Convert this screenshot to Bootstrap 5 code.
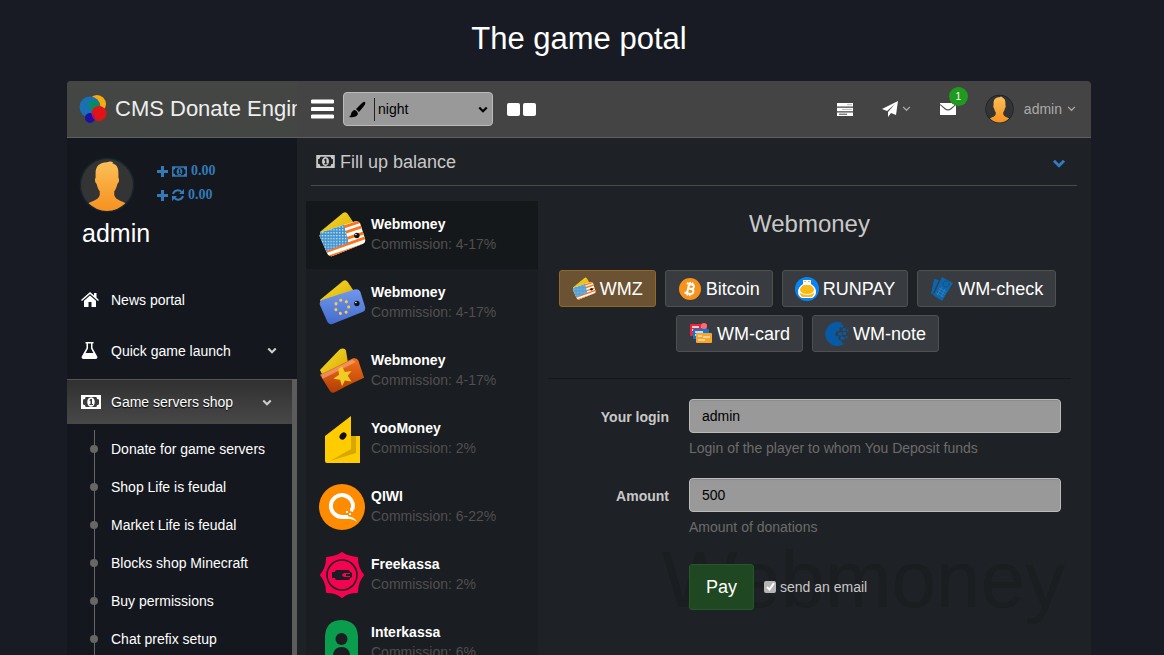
<!DOCTYPE html>
<html lang="en">
<head>
<meta charset="utf-8">
<meta name="viewport" content="width=device-width, initial-scale=1">
<title>CMS Donate Engine</title>
<link href="https://cdn.jsdelivr.net/npm/bootstrap@5.3.0/dist/css/bootstrap.min.css" rel="stylesheet">
<style>
  body { background: #181b23; color: #c8c8c8; font: 14px/20px "Liberation Sans", Arial, sans-serif; }
  a { text-decoration: none; }
  svg { display: block; flex: none; }
  button { font-family: inherit; }
  .shell { padding: 0 73px 0 67px; }
  .page-title { font-size: 31px; line-height: 37px; padding-top: 20px; padding-bottom: 24px; color: #fff; }
  .panel { background: #1e2125; border-radius: 4px 4px 0 0; }

  .topbar { background: #444; height: 57px; border-bottom: 1px solid #5e5e5e; border-radius: 4px 4px 0 0; }
  .brand { width: 230px; height: 56px; padding-left: 12px; gap: 8px; background: #444644; border-radius: 4px 0 0 0; color: #eee; font-size: 22px; white-space: nowrap; }
  .icon-btn { background: none; border: 0; padding: 0; color: #fff; }
  .burger { margin-left: 14px; }
  .theme-picker { width: 150px; margin: 0 14px 0 9px; color: #000; }
  .theme-picker select { width: 100%; height: 34px; padding: 0 30px 0 34px; appearance: none; background: #999; border: 1px solid #bbb; border-radius: 4px; color: #000; }
  .theme-picker .brush { left: 6px; top: 9px; }
  .theme-picker .bar { left: 31px; top: 6px; width: 1px; height: 23px; background: #222; }
  .theme-picker .arrow { right: 5px; top: 14px; }
  .tiles { gap: 3px; }
  .tiles span { width: 13px; height: 13px; background: #fff; border-radius: 2px; }
  .tools { padding-right: 15px; gap: 29px; }
  .tools a { color: #aaa; }
  .account { gap: 5px; }
  .account span { padding-left: 5px; }
  .count { top: -16px; left: 9px; width: 19px; height: 19px; border-radius: 50%; background: #1f9a1f; color: #fff; font-size: 10px; line-height: 19px; text-align: center; }

  .sidebar { width: 230px; background: #14171e; flex: none; }
  .profile { padding: 19px 12px 0; gap: 22px; }
  .balances { font: bold 14px/24px "Liberation Serif", "Times New Roman", serif; padding-top: 2px; }
  .balances a { color: #337ab7; gap: 4px; }
  .user-name { font-size: 25px; line-height: 32px; color: #fff; padding: 4px 0 0 15px; margin-bottom: 28px; }
  .menu { gap: 6px; }
  .menu-link { height: 45px; padding: 0 20px 0 14px; color: #fff; }
  .menu-link .glyph { width: 30px; }
  .menu-link .arrow { color: #ccc; }
  .scroller { border-right: 5px solid #5c5c5c; padding-bottom: 20px; }
  .menu-link.current { background: linear-gradient(#303030, #484848); border-top: 1px solid #555; text-shadow: 0 1px 1px #000; }
  .submenu { margin: 6px 0 0 27px; border-left: 1px solid #666; }
  .submenu a { height: 38px; color: #fff; }
  .submenu a::before { content: ""; width: 8px; height: 8px; margin: 0 13px 0 -5px; border-radius: 50%; background: #666; }

  .section-head { height: 48px; margin: 0 14px; padding: 0 11px 0 5px; border-bottom: 1px solid #4a4a4a; }
  .section-head h2 { font-size: 18px; line-height: 24px; gap: 5px; }
  .section-head .icon-btn { color: #337ac0; padding-top: 4px; }
  .workarea { padding: 15px 20px 0 9px; gap: 10px; }
  .methods { width: 232px; flex: none; background: #1a1d21; }
  .methods a { height: 68px; padding: 0 12px; gap: 5px; color: #505050; }
  .methods a.current { background: #15181a; }
  .methods strong { color: #fff; display: block; }
  .methods a > span { padding-bottom: 2px; }
  .kind-title { font-size: 24px; line-height: 28px; padding: 9px 0 32px; }
  .kinds { gap: 8px 9px; padding: 0 4px 26px 0; border-bottom: 1px solid #15181a; }
  .kind { height: 37px; padding: 0 12px; gap: 4px; font-size: 18px; line-height: 26px; color: #fff; background: #383b3f; border: 1px solid #505050; border-radius: 3px; }
  .kind.current { background: #6b5233; border-color: #956727; }
  .pay-form { padding: 20px 10px 0 0; }
  .line { gap: 20px; }
  .line > label { width: 121px; padding-top: 8px; text-align: right; font-weight: bold; flex: none; }
  .field { width: 100%; height: 34px; padding: 0 12px; background: #999; border: 1px solid #bbb; border-radius: 4px; color: #000; box-shadow: inset 0 1px 1px #8a8a8a; }
  .hint { color: #6c6c6c; padding-top: 5px; height: 45px; }
  .actions { margin: 7px 0 0 141px; gap: 10px; }
  .pay { width: 65px; height: 46px; font-size: 18px; background: #1f4722; color: #fff; border: 1px solid #205a24; border-radius: 3px; }
  .actions input { width: 12px; height: 12px; appearance: none; background: #b5b5b5; border-radius: 2px; }
  .tick { left: 1px; top: 4px; pointer-events: none; }
  .watermark { right: 6px; bottom: -20px; font-size: 80px; line-height: 100px; color: #1a1e21; pointer-events: none; }
</style>
</head>
<body class="vh-100 overflow-hidden d-flex flex-column">

<svg width="0" height="0" class="position-absolute" aria-hidden="true">
  <defs>
    <linearGradient id="skin" x2="0" y2="1"><stop offset="0" stop-color="#fbc05a"/><stop offset=".6" stop-color="#f8a233"/><stop offset="1" stop-color="#f7901e"/></linearGradient>
    <linearGradient id="gold" x2="1" y2="1"><stop offset="0" stop-color="#f8df30"/><stop offset="1" stop-color="#d9a800"/></linearGradient>
    <linearGradient id="euro" x2="0" y2="1"><stop offset="0" stop-color="#7fa5f5"/><stop offset="1" stop-color="#3e68cc"/></linearGradient>
    <linearGradient id="rust" x2="0" y2="1"><stop offset="0" stop-color="#f5701a"/><stop offset="1" stop-color="#b03d05"/></linearGradient>
    <clipPath id="round"><circle cx="27" cy="27" r="25"/></clipPath>
    <clipPath id="card"><path d="M4 22 38 11q4-1 6 2l5 16q1 4-2 5L15 47q-3 1-5-2L2 27q-1-3 2-5z"/></clipPath>
    <pattern id="dots" width="3" height="3" patternUnits="userSpaceOnUse"><rect width="3" height="3" fill="#3f92cf"/><rect x="1" y="1" width="1.400" height="1.400" fill="#d4ebfa"/></pattern>
    <symbol id="i-chev" viewBox="0 0 12 8"><path d="M1.500 1.500 6 6l4.500-4.500" fill="none" stroke="currentColor" stroke-width="2.600"/></symbol>
    <symbol id="i-thin" viewBox="0 0 10 7"><path d="M1 1l4 4 4-4" fill="none" stroke="currentColor" stroke-width="1.500"/></symbol>
    <symbol id="i-money" viewBox="0 0 20 14"><path fill-rule="evenodd" fill="currentColor" d="M0 0h20v14H0zM4.500 2a2.500 2.500 0 0 1-2.500 2.500v5A2.500 2.500 0 0 1 4.500 12h11a2.500 2.500 0 0 1 2.500-2.500v-5A2.500 2.500 0 0 1 15.500 2zM10 2.200c5 0 5 9.600 0 9.600s-5-9.600 0-9.600zM9.500 4h1.500v5h1v1H8.500V9h1V5.800h-1V5z"/></symbol>
    <symbol id="i-plus" viewBox="0 0 11 11"><path d="M5.500 0v11M0 5.500h11" stroke="currentColor" stroke-width="3"/></symbol>
    <symbol id="i-avatar" viewBox="0 0 54 54"><circle cx="27" cy="27" r="26.500" fill="#14252e"/><circle cx="27" cy="27" r="25" fill="#343434"/><path clip-path="url(#round)" fill="url(#skin)" d="M27 5c2-1 4-1 6 0l-1 1c4 1 6 4 6 9v5c1 1 1 4-1 6-1 4-2 6-3 7v4c2 6 9 5 12 9v8H8v-8c3-4 10-3 12-9v-4c-1-1-2-3-3-7-2-2-2-5-1-6v-5c0-6 4-10 11-10z"/></symbol>
    <symbol id="i-usd" viewBox="0 0 50 50"><path d="M2 22 26 2q3-2 5 1l8 12-34 12z" fill="url(#gold)"/><g clip-path="url(#card)"><path d="M0 0h50v50H0z" fill="#fff"/><path d="M20 19 50 9M20 25l30-10M20 32l30-10M6 43l46-16M8 49l44-15" stroke="#ff7418" stroke-width="3"/><path d="M0 23l27-9 5 19-26 10z" fill="url(#dots)"/></g><circle cx="40.500" cy="25.500" r="2.800" fill="#111"/><circle cx="39.500" cy="24.500" r=".8" fill="#fff"/></symbol>
    <symbol id="i-eur" viewBox="0 0 50 50"><path d="M2 22 26 2q3-2 5 1l8 12-34 12z" fill="url(#gold)"/><g clip-path="url(#card)"><path d="M0 0h50v50H0z" fill="url(#euro)"/></g><circle cx="25" cy="29" r="7" fill="none" stroke="#ffc64a" stroke-width="3.200" stroke-dasharray=".1 6.180" stroke-linecap="round"/><circle cx="40.500" cy="25.500" r="2.800" fill="#111"/><circle cx="39.500" cy="24.500" r=".8" fill="#fff"/></symbol>
    <symbol id="i-rub" viewBox="0 0 50 50"><path d="M2 24 22 3q4-3 7 0l2 12L5 30z" fill="url(#gold)"/><path d="M2 29q17-8 34-17 4-1 6 2l6 18q-16 7-30 15-4 2-6-2z" fill="url(#rust)"/><path d="M3 29q17-8 33-16l3 3L5 33z" fill="#f4a27a" opacity=".7"/><path d="M25 20l3 6 7-1-4 5 4 6-7-1-3 6-2-7-7-1 6-4-1-6z" fill="#f2cb24"/></symbol>
  </defs>
</svg>

<h1 class="page-title shell text-center fw-normal m-0 flex-shrink-0">The game potal</h1>

<div class="shell flex-grow-1 d-flex overflow-hidden">
<div class="panel flex-grow-1 d-flex flex-column">
  <header class="topbar d-flex align-items-center flex-shrink-0">
    <a href="#" class="brand d-flex align-items-center overflow-hidden">
      <svg width="28" height="30" viewBox="0 0 28 30"><circle cx="18" cy="10" r="9" fill="#f7ab0c"/><circle cx="11" cy="13" r="10.500" fill="#1a70b4"/><path d="M9 9a9 9 0 0 1 10-1 10.500 10.500 0 0 1 2 9q-2 3-5 2-6-3-7-10z" fill="#078c62"/><circle cx="11" cy="24" r="5" fill="#1c119e"/><circle cx="20" cy="19.500" r="7.500" fill="#df1418"/><path d="M13 19q3 2 3 6-3-1-3-6z" fill="#8b1590"/></svg>
      <span>CMS Donate Engine</span>
    </a>
    <button type="button" class="icon-btn burger" aria-label="Toggle menu"><svg width="23" height="20" viewBox="0 0 23 20"><path d="M1.500 2.500h20M1.500 10h20M1.500 17.500h20" stroke="#fff" stroke-width="4" stroke-linecap="round"/></svg></button>
    <div class="theme-picker position-relative">
      <select aria-label="Theme"><option>night</option><option>day</option></select>
      <svg class="brush position-absolute pe-none" width="17" height="17" viewBox="0 0 17 17"><path d="M16 1q1 1-1 4l-5 6-3-3 5-5q3-3 4-2zM5 9q3 0 4 4-2 4-9 3 2-1 2-3t3-4z"/></svg>
      <span class="bar position-absolute"></span>
      <svg class="arrow position-absolute pe-none" width="10" height="7"><use href="#i-chev"/></svg>
    </div>
    <button type="button" class="icon-btn tiles d-flex" aria-label="Layout"><span></span><span></span></button>
    <nav class="tools ms-auto d-flex align-items-center" aria-label="User tools">
      <a href="#" aria-label="Tasks"><svg width="16" height="13" viewBox="0 0 16 13"><path d="M0 0h16v3.500H0zM0 4.700h16v3.500H0zM0 9.400h16v3.500H0z" fill="#fff"/><path d="M10 1.700h5M5 6.400h10" stroke="#bbb"/><path d="M2 11.200h8" stroke="#444"/></svg></a>
      <a href="#" class="d-flex align-items-center gap-1" aria-label="Send"><svg width="16" height="16" viewBox="0 0 16 16"><path d="M16 0l-2 14-5-2-3 4v-5l7-8-8 7-5-2z" fill="#fff"/></svg><svg width="9" height="6"><use href="#i-thin"/></svg></a>
      <a href="#" class="position-relative" aria-label="Messages"><svg width="16" height="12" viewBox="0 0 16 12"><path d="M0 2l5 4.500q3 2 6 0L16 2v10H0zM0 0h16v1l-6 4.800q-2 1-4 0L0 1z" fill="#fff"/></svg><span class="count position-absolute">1</span></a>
      <a href="#" class="account d-flex align-items-center"><svg width="29" height="30"><use href="#i-avatar"/></svg><span>admin</span><svg width="9" height="6"><use href="#i-thin"/></svg></a>
    </nav>
  </header>

  <div class="d-flex flex-grow-1 align-items-stretch overflow-hidden">
    <aside class="sidebar">
      <div class="profile d-flex align-items-start">
        <svg width="56" height="56"><use href="#i-avatar"/></svg>
        <div class="balances">
          <a href="#" class="d-flex align-items-center"><svg width="11" height="11"><use href="#i-plus"/></svg><svg width="15" height="11"><use href="#i-money"/></svg>0.00</a>
          <a href="#" class="d-flex align-items-center"><svg width="11" height="11"><use href="#i-plus"/></svg><svg width="12" height="12" viewBox="0 0 12 12"><path d="M1 5a5 5 0 0 1 8.500-2M11 7a5 5 0 0 1-8.500 2" fill="none" stroke="currentColor" stroke-width="2"/><path d="M12 0v5H7zM0 12V7h5z" fill="currentColor"/></svg>0.00</a>
        </div>
      </div>
      <div class="user-name">admin</div>
      <nav class="menu d-flex flex-column" aria-label="Main menu">
        <a href="#" class="menu-link d-flex align-items-center"><span class="glyph"><svg width="18" height="15" viewBox="0 0 18 15"><path d="M9 0l4 3.500V1h2.500v4.500L18 8l-1 1-8-7-8 7-1-1z" fill="#fff"/><path d="M9 3.500l6 5.300V15h-4.500v-5h-3v5H3V8.800z" fill="#fff"/></svg></span>News portal</a>
        <a href="#" class="menu-link d-flex align-items-center"><span class="glyph"><svg width="17" height="17" viewBox="0 0 17 17"><path fill-rule="evenodd" d="M4.500 0h8v1.500h-1V6l5 9q0 2-2 2h-12q-2 0-2-2l5-9V1.500h-1zm2.500 1.500v5L4.600 11h7.800L10 6.500v-5z" fill="#fff"/></svg></span>Quick game launch<svg class="arrow ms-auto" width="10" height="7"><use href="#i-chev"/></svg></a>
        <div class="scroller">
          <a href="#" class="menu-link current d-flex align-items-center"><span class="glyph"><svg width="20" height="14"><use href="#i-money"/></svg></span>Game servers shop<svg class="arrow ms-auto" width="10" height="7"><use href="#i-chev"/></svg></a>
          <div class="submenu">
            <a href="#" class="d-flex align-items-center">Donate for game servers</a>
            <a href="#" class="d-flex align-items-center">Shop Life is feudal</a>
            <a href="#" class="d-flex align-items-center">Market Life is feudal</a>
            <a href="#" class="d-flex align-items-center">Blocks shop Minecraft</a>
            <a href="#" class="d-flex align-items-center">Buy permissions</a>
            <a href="#" class="d-flex align-items-center">Chat prefix setup</a>
          </div>
        </div>
      </nav>
    </aside>

    <main class="flex-grow-1">
      <div class="section-head d-flex align-items-center justify-content-between">
        <h2 class="d-flex align-items-center fw-normal m-0"><svg width="19" height="13"><use href="#i-money"/></svg>Fill up balance</h2>
        <button type="button" class="icon-btn" aria-label="Collapse"><svg width="14" height="9"><use href="#i-chev"/></svg></button>
      </div>
      <div class="workarea d-flex align-items-start">
        <nav class="methods" aria-label="Payment systems">
          <a href="#" class="current d-flex align-items-center"><svg width="48" height="48"><use href="#i-usd"/></svg><span><strong>Webmoney</strong>Commission: 4-17%</span></a>
          <a href="#" class="d-flex align-items-center"><svg width="48" height="48"><use href="#i-eur"/></svg><span><strong>Webmoney</strong>Commission: 4-17%</span></a>
          <a href="#" class="d-flex align-items-center"><svg width="48" height="48"><use href="#i-rub"/></svg><span><strong>Webmoney</strong>Commission: 4-17%</span></a>
          <a href="#" class="d-flex align-items-center"><svg width="48" height="48" viewBox="0 0 48 48"><path d="M7 21h35v27H9q-2 0-2-2z" fill="#fc0"/><path d="M12 46 38 38V21h-5v11z" fill="#d7a900"/><path d="M7 21 33 1v33L12 46q-5 1-5-3z" fill="#fc0"/><ellipse cx="25" cy="21" rx="3" ry="4" transform="rotate(40 25 21)" fill="#111"/></svg><span><strong>YooMoney</strong>Commission: 2%</span></a>
          <a href="#" class="d-flex align-items-center"><svg width="48" height="48" viewBox="0 0 48 48"><circle cx="24" cy="24" r="23" fill="#ff8c00"/><path d="M34.500 26A11 11 0 1 0 24 34h6" fill="none" stroke="#fff" stroke-width="4"/><path d="M32 25h4l-1 4-3-1zM28 28h2v2h-2zM31 30h2v2h-2z" fill="#fff"/><path d="M24 33q12-1 15 6-5-4-13-3z" fill="#fff"/></svg><span><strong>QIWI</strong>Commission: 6-22%</span></a>
          <a href="#" class="d-flex align-items-center"><svg width="48" height="48" viewBox="0 0 48 48"><path d="M24 2q5 4 15 5 0 10 6 17-6 7-6 17-10 0-15 5-5-5-15-5 0-10-6-17 6-7 6-17 10-1 15-5z" fill="#f30350" stroke="#f30350" stroke-width="2" stroke-linejoin="round"/><circle cx="24" cy="24" r="15" fill="none" stroke="#1a1d21" stroke-width="1.500"/><path d="M14 21h3q0-2 2-2h11q2 0 2 2l2 1v4l-2 1q0 2-2 2H19q-2 0-2-2h-3z" fill="#1a1d21"/><path d="M26 22h6v4h-6q-4-2 0-4z" fill="#f30350"/><path d="M28 23h4v2h-4z" fill="#1a1d21"/></svg><span><strong>Freekassa</strong>Commission: 2%</span></a>
          <a href="#" class="d-flex align-items-center"><svg width="48" height="48" viewBox="0 0 48 48"><path d="M7 48V17Q8 1 24 1h0q15 1 16 16v31z" fill="#0a9d4d"/><circle cx="23.500" cy="20" r="6" fill="#1a1d21"/><path d="M15 48V36q1-8 8.500-8T32 36v12z" fill="#1a1d21"/></svg><span><strong>Interkassa</strong>Commission: 6%</span></a>
        </nav>

        <section class="flex-grow-1">
          <h3 class="kind-title text-center fw-normal m-0">Webmoney</h3>
          <div class="kinds d-flex flex-wrap justify-content-center">
            <button type="button" class="kind current d-flex align-items-center"><svg width="24" height="24"><use href="#i-usd"/></svg>WMZ</button>
            <button type="button" class="kind d-flex align-items-center"><svg width="24" height="24" viewBox="0 0 24 24"><circle cx="12" cy="12" r="11" fill="#f7931a"/><g transform="rotate(14 12 12)" fill="none" stroke="#fff" stroke-width="2"><path d="M7.500 7.200h5.500a2.200 2.200 0 0 1 0 4.500H10h3.500a2.500 2.500 0 0 1 0 5h-6M10 7v10"/><path d="M10.700 5v2M13.200 5v2M10.700 17v2M13.200 17v2" stroke-width="1.500"/></g></svg>Bitcoin</button>
            <button type="button" class="kind d-flex align-items-center"><svg width="24" height="24" viewBox="0 0 24 24"><circle cx="12" cy="12" r="12" fill="#0a84f5"/><path d="M8 3h8v4q5 3 5 8 0 4-4 6H7q-4-2-4-6 0-5 5-8z" fill="#fff"/><path d="M9 8h6q4 2 4 5-1 4-7 4t-7-4q0-3 4-5zM5 16q7 4 14 0 0 3-3 4H8q-3-1-3-4z" fill="#fdb913"/><path d="M9 4.500h2M13 4.500h2" stroke="#fdb913"/></svg>RUNPAY</button>
            <button type="button" class="kind d-flex align-items-center"><svg width="24" height="24" viewBox="0 0 24 24"><path d="M4 2l5 1-6 14-2 0zM12 0l11 6-11 18-9-6z" fill="#0b66ad"/><path d="M10 2 4 16" stroke="#383b3f"/><path d="M9 11l7 4M8 13.500l7 4M6.500 16l7 4M12 10l-5 8M15 12l-4 8" stroke="#3c7db3" stroke-width=".8"/><circle cx="16" cy="7" r="3" fill="none" stroke="#383b3f" stroke-dasharray="1 1"/></svg>WM-check</button>
            <button type="button" class="kind d-flex align-items-center"><svg width="24" height="24" viewBox="0 0 24 24"><rect x="1" y="2" width="17" height="12" rx="1" fill="#e9263b"/><path d="M3 5h7M12 5h2M3 8h2" stroke="#fff" stroke-width="1.500"/><circle cx="15" cy="4" r="3" fill="#ff6a70"/><rect x="4" y="7" width="16" height="10" rx="1" fill="#0879d6"/><path d="M6 10h8M6 13h3" stroke="#fff" stroke-width="1.300"/><rect x="7" y="11" width="16" height="10" rx="1" fill="#f8a52b"/><path d="M9 14h4M14 15h7M9 18h7" stroke="#fff" stroke-width="1.200"/></svg>WM-card</button>
            <button type="button" class="kind d-flex align-items-center"><svg width="24" height="24" viewBox="0 0 24 24"><path d="M17 1A12 12 0 1 0 19 22l-4-3-3-4-2-3 2-3 3-4z" fill="#075aa5"/><path d="M10 6h4v3h-4zM14 2h3v3h-3zM17 5h3v3h-3zM13 10h4v3h-4zM18 9h3v3h-3zM11 14h3v3h-3zM16 14h4v3h-4zM14 18h4v3h-4zM21 6h2v2h-2zM21 13h2v2h-2z" fill="#075aa5" transform="rotate(8 12 12)"/></svg>WM-note</button>
          </div>
          <form class="pay-form position-relative">
            <span class="watermark position-absolute" aria-hidden="true">Webmoney</span>
            <div class="line d-flex">
              <label for="login">Your login</label>
              <div class="flex-grow-1"><input id="login" class="field" type="text" value="admin"><div class="hint">Login of the player to whom You Deposit funds</div></div>
            </div>
            <div class="line d-flex">
              <label for="amount">Amount</label>
              <div class="flex-grow-1"><input id="amount" class="field" type="text" value="500"><div class="hint">Amount of donations</div></div>
            </div>
            <div class="actions d-flex align-items-center position-relative">
              <button type="submit" class="pay p-0">Pay</button>
              <div class="d-flex align-items-center gap-1 position-relative">
                <input type="checkbox" id="mail" checked>
                <svg class="tick position-absolute" width="11" height="11" viewBox="0 0 11 11"><path d="M2 6l2.500 2.500L9 2" fill="none" stroke="#fff" stroke-width="2"/></svg>
                <label for="mail">send an email</label>
              </div>
            </div>
          </form>
        </section>
      </div>
    </main>
  </div>
</div>
</div>

<script src="https://cdn.jsdelivr.net/npm/bootstrap@5.3.0/dist/js/bootstrap.bundle.min.js"></script>
</body>
</html>
